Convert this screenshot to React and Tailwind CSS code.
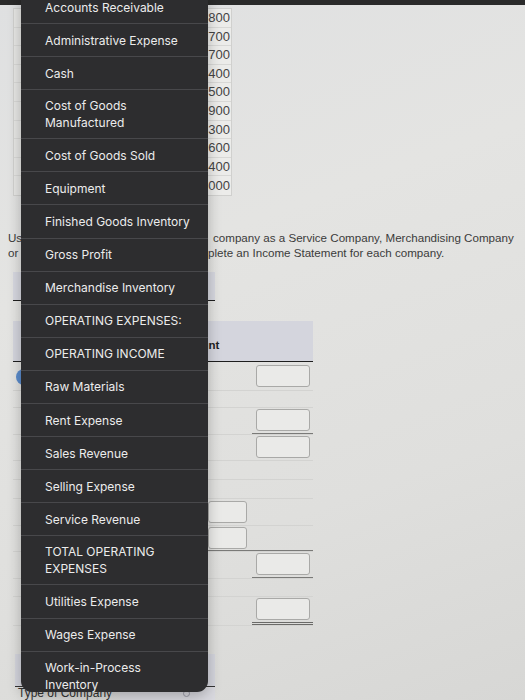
import React from "react";

const menuItems = [
  ["Accounts Receivable"],
  ["Administrative Expense"],
  ["Cash"],
  ["Cost of Goods", "Manufactured"],
  ["Cost of Goods Sold"],
  ["Equipment"],
  ["Finished Goods Inventory"],
  ["Gross Profit"],
  ["Merchandise Inventory"],
  ["OPERATING EXPENSES:"],
  ["OPERATING INCOME"],
  ["Raw Materials"],
  ["Rent Expense"],
  ["Sales Revenue"],
  ["Selling Expense"],
  ["Service Revenue"],
  ["TOTAL OPERATING", "EXPENSES"],
  ["Utilities Expense"],
  ["Wages Expense"],
  ["Work-in-Process", "Inventory"],
];

const tableValues = [
  "31,800",
  "8,700",
  "2,700",
  "12,400",
  "6,500",
  "41,900",
  "5,300",
  "9,600",
  "3,400",
  "14,000",
];

function InputBox({ className = "" }) {
  return (
    <div
      className={
        "h-[22px] rounded-[3px] border border-[#a9a9a7] bg-[#eaeae8] " +
        className
      }
    />
  );
}

// one line of the worksheet under the headers
function SheetRow({ h, mid, right, midLine, rightLine, double }) {
  return (
    <div
      className={
        "grid grid-cols-[192px_47px_61px] border-b border-[#d3d3d1] " + h
      }
    >
      <div />
      <div className={"flex flex-col justify-center " + (midLine ? "border-b border-[#7a7a78]" : "")}>
        {mid && <InputBox className="ml-[3px] w-[39px]" />}
      </div>
      <div
        className={
          "flex flex-col justify-center " +
          (rightLine ? "border-b border-[#7a7a78] " : "") +
          (double ? "border-b-[3px] border-double border-[#6a6a68]" : "")
        }
      >
        {right && <InputBox className="ml-[4px] w-[54px]" />}
      </div>
    </div>
  );
}

function DropdownMenu() {
  return (
    <div className="absolute left-[21px] top-[-9px] h-[701px] w-[187px] overflow-hidden rounded-b-[11px] bg-[#2d2d2f] font-['Inter','Liberation_Sans',sans-serif] text-[12px] leading-[17px] text-[#ececec] shadow-[0_4px_14px_rgba(0,0,0,0.25)]">
      {menuItems.map((lines, i) => (
        <div
          key={i}
          className={
            "flex flex-col justify-center border-b border-[#48484b] pl-[24px] " +
            (lines.length > 1 ? "h-[49px]" : "h-[33.1px]")
          }
        >
          {lines.map((l) => (
            <span key={l} className="whitespace-nowrap">
              {l}
            </span>
          ))}
        </div>
      ))}
    </div>
  );
}

export default function App() {
  return (
    <div className="relative h-[700px] w-[525px] overflow-hidden bg-[linear-gradient(160deg,#dfe0e1_0%,#e4e4e2_35%,#dfdfdd_70%,#d7d7d5_100%)] font-['Liberation_Sans',Arial,sans-serif] text-[#3a3a3a]">
      {/* screen bezel at top */}
      <div className="h-[5px] bg-[#2a2a2a]" />

      {/* data table */}
      <div className="ml-[13px] mt-[3px] w-[219px] border border-[#d0d0ce] bg-[#e6e6e4]">
        {tableValues.map((v) => (
          <div
            key={v}
            className="flex h-[18.6px] items-center border-b border-[#d8d8d6] last:border-b-0"
          >
            <div className="flex-1 pl-2 text-[12px]">Item</div>
            <div className="flex h-full w-[46px] items-center justify-end bg-[#ececea] pr-[1px] text-[13px] text-[#444]">
              {v}
            </div>
          </div>
        ))}
      </div>

      {/* instructions */}
      <div className="mt-[34px] pl-[8px] text-[11.6px] leading-[15px] text-[#3b3b3b]">
        <div className="flex whitespace-nowrap">
          <span className="w-[197px] shrink-0 overflow-hidden">Use the information above to classify each</span>
          <span className="ml-[8px]">company as a Service Company, Merchandising Company</span>
        </div>
        <div className="flex whitespace-nowrap">
          <span className="w-[197px] shrink-0 overflow-hidden">or Manufacturing Company, and then com</span>
          <span className="ml-[3px]">plete an Income Statement for each company.</span>
        </div>
      </div>

      {/* first header band */}
      <div className="ml-[13px] mt-[12px] h-[29px] w-[202px] border-b-[1.5px] border-[#1e1e1e] bg-[#d6d7df]" />

      {/* second header band */}
      <div className="ml-[13px] mt-[20px] flex h-[41px] w-[300px] items-end border-b-[1.5px] border-[#1e1e1e] bg-[#d4d5dd] pb-[7px]">
        <span className="ml-[163px] text-[11.5px] font-bold text-[#222]">Amount</span>
      </div>

      {/* worksheet rows */}
      <div className="relative ml-[13px] w-[300px]">
        <div className="absolute left-[3px] top-[7px] h-[16px] w-[16px] rounded-full bg-[#5b8ccc]" />
        <SheetRow h="h-[29px]" right />
        <SheetRow h="h-[17px]" />
        <SheetRow h="h-[27px]" right rightLine />
        <SheetRow h="h-[26px]" right />
        <SheetRow h="h-[19px]" />
        <SheetRow h="h-[19px]" />
        <SheetRow h="h-[27px]" mid />
        <SheetRow h="h-[26px]" mid midLine rightLine />
        <SheetRow h="h-[27px]" right rightLine />
        <SheetRow h="h-[18px]" />
        <SheetRow h="h-[29px]" right double />
      </div>

      {/* type of company */}
      <div className="ml-[15px] mt-[28px] h-[33px] w-[200px] border-b border-[#333] bg-[#d4d5dd]" />
      <div className="ml-[18px] flex items-center text-[12px] leading-[13px] text-[#333]">
        <span>Type of Company</span>
        <div className="ml-[8px] flex h-[13px] w-[95px] items-center justify-end bg-[#d9d9df] pr-[25px]">
          <div className="h-[7px] w-[7px] rounded-full border border-[#9a9aa6]" />
        </div>
      </div>

      <DropdownMenu />
    </div>
  );
}
